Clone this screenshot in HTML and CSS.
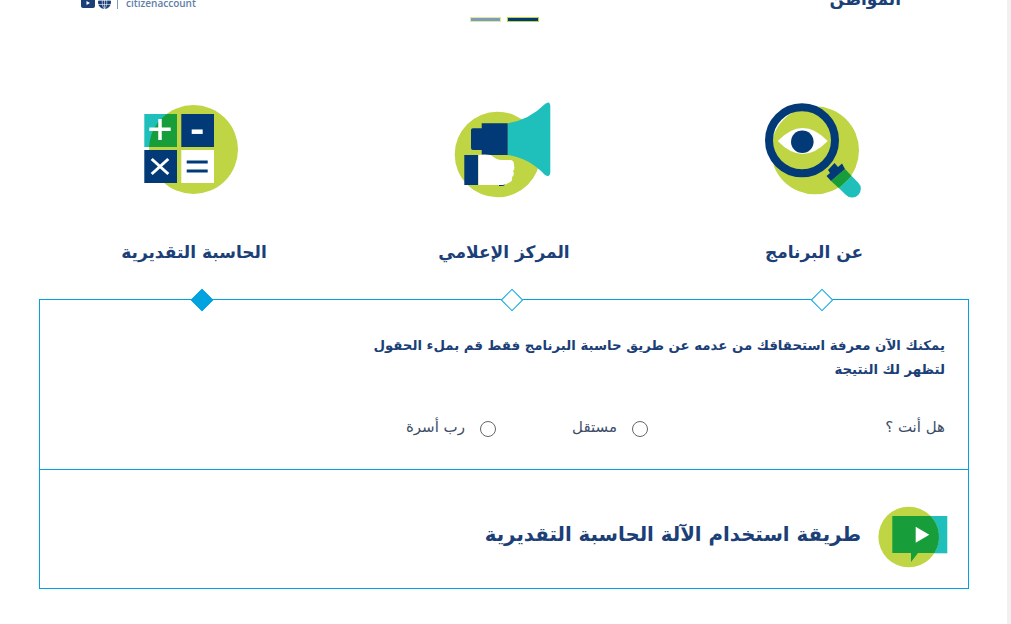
FILE: index.html
```html
<!DOCTYPE html>
<html lang="ar" dir="rtl">
<head>
<meta charset="utf-8">
<title>حساب المواطن</title>
<link rel="stylesheet" href="styles.css">
</head>
<body>
<div class="page">
  <main class="content">
    <header class="top">
      <div class="top-title">المواطن</div>
      <div class="social" dir="ltr">
        <svg class="social-icon" width="14" height="10" viewBox="0 0 14 10"><rect width="14" height="10" rx="2" fill="#1c3f78"/><path d="M5.500 3v4l3.500-2z" fill="#fff"/></svg>
        <svg class="social-icon" width="13" height="13" viewBox="0 0 13 13"><circle cx="6.500" cy="6.500" r="6.500" fill="#1c3f78"/><path d="M0 4.500h13M0 8.500h13M6.500 0v13M6.500 0c-3 3-3 10 0 13M6.500 0c3 3 3 10 0 13" stroke="#fff" stroke-width=".6" fill="none"/></svg>
        <span class="social-sep"></span>
        <span class="social-name">citizenaccount</span>
      </div>
    </header>
    <div class="pager" dir="ltr">
      <span class="pager-bar pager-bar-muted"></span>
      <span class="pager-bar pager-bar-active"></span>
    </div>

    <nav class="tabs">
      <div class="tab">
        <svg class="tab-icon" width="100" height="100" viewBox="0 0 100 100">
          <circle cx="51" cy="50.300" r="44" fill="#bfd544"/>
          <path d="M75 88.300L87.700 76L94.300 82.700A8.500 8.500 0 0 1 82 95Z" fill="#1fbfbb"/>
          <path d="M67 81L81 69L87.700 76L75 88.300Z" fill="#179e3a"/>
          <path d="M64 70L70.500 63L74 67L78 63.500L81 69L67 81L62.500 76L66 73Z" fill="#023a78"/>
          <circle cx="38" cy="40.300" r="33" fill="none" stroke="#023a78" stroke-width="8"/>
          <path d="M13.700 41Q38.700 15 63.700 41Q38.700 67 13.700 41Z" fill="#fff"/>
          <circle cx="38.300" cy="41.700" r="11.300" fill="#023a78"/>
        </svg>
        <h2 class="tab-title">عن البرنامج</h2>
      </div>
      <div class="tab">
        <svg class="tab-icon" width="100" height="100" viewBox="0 0 100 100">
          <circle cx="43.500" cy="54.500" r="42.800" fill="#bfd544"/>
          <path d="M53.700 23.300Q75 20 91 4Q96 0 96.300 6V72Q96 78 91 75Q75 58 53.700 55Z" fill="#1fbfbb"/>
          <path d="M27.700 23.300H53.700V55H27.700V50H19Q17 50 17 48V30Q17 28.300 19 28.300H27.700Z" fill="#023a78"/>
          <path d="M10.300 55H24.300V85H10.300Z" fill="#023a78"/>
          <path d="M45 82h6q1 4-3 4h-3z" fill="#023a78"/>
          <path d="M24.300 55Q30 54 37 55Q42 60 48 60H56Q60 60 60 65Q61 70 59 71Q61 75 58 77Q59 82 54 83Q52 85 46 85H24.300Z" fill="#fff"/>
        </svg>
        <h2 class="tab-title">المركز الإعلامي</h2>
      </div>
      <div class="tab">
        <svg class="tab-icon" width="100" height="100" viewBox="0 0 100 100">
          <circle cx="49.500" cy="49.500" r="44.500" fill="#bfd544"/>
          <rect x="0.300" y="14" width="32.700" height="33" fill="#1fbfbb"/>
          <path d="M22.700 14H33V47H5.100A44.500 44.500 0 0 1 22.700 14Z" fill="#179e3a"/>
          <rect x="37.300" y="14" width="32.700" height="33" fill="#023a78"/>
          <rect x="0.300" y="50" width="32.700" height="33" fill="#023a78"/>
          <rect x="37.300" y="50" width="32.700" height="33" fill="#fff"/>
          <path d="M16 19V40M5.300 29.300H26.700" stroke="#fff" stroke-width="3.500" fill="none"/>
          <path d="M47.700 31.700H58.700" stroke="#fff" stroke-width="4.500" fill="none"/>
          <path d="M7.700 59L24.300 74M24.300 59L7.700 74" stroke="#fff" stroke-width="3" fill="none"/>
          <path d="M42.700 62H63.700M42.700 71H63.700" stroke="#023a78" stroke-width="3" fill="none"/>
        </svg>
        <h2 class="tab-title">الحاسبة التقديرية</h2>
      </div>
    </nav>

    <section class="panel">
      <span class="marker marker-one"></span>
      <span class="marker marker-two"></span>
      <span class="marker marker-three"></span>
      <div class="panel-body">
        <p class="intro">يمكنك الآن معرفة استحقاقك من عدمه عن طريق حاسبة البرنامج فقط قم بملء الحقول لتظهر لك النتيجة</p>
        <div class="question">
          <span class="q-label">هل أنت ؟</span>
          <label class="option option-first"><input type="radio" name="kind" class="radio"><span>مستقل</span></label>
          <label class="option"><input type="radio" name="kind" class="radio"><span>رب أسرة</span></label>
        </div>
      </div>
      <div class="howto">
        <svg class="howto-icon" width="70" height="62" viewBox="0 0 70 62">
          <rect x="30" y="10" width="39.300" height="37.300" fill="#1fbfbb"/>
          <circle cx="30.700" cy="31" r="30.300" fill="#bfd544"/>
          <path d="M14.300 10H52.500A30.300 30.300 0 0 1 56.400 47H40L33 56V47H14.300Z" fill="#179e3a"/>
          <path d="M37.700 20.700L51.300 28.700L37.700 36.700Z" fill="#fff"/>
        </svg>
        <h3 class="howto-title">طريقة استخدام الآلة الحاسبة التقديرية</h3>
      </div>
    </section>
  </main>
  <div class="scrollbar"></div>
</div>
</body>
</html>
```
FILE: styles.css
```css
* { box-sizing: border-box; }
html, body { margin: 0; height: 100%; overflow: hidden; background: #fff; }
body { font-family: "DejaVu Sans", "Noto Sans", sans-serif; color: #023a78; }
.page { display: flex; height: 624px; direction: ltr; }
.scrollbar { width: 4px; background: #f1f1f1; flex: none; }
.content { flex: 1; direction: rtl; min-width: 0; }

.top { height: 9px; margin: 0 38px 0 81px; display: flex; justify-content: space-between; align-items: flex-end; overflow: hidden; padding: 0 68px 0 0; }
.top-title { font-size: 17px; line-height: 20px; font-weight: 700; color: #1c3f78; }
.social { display: flex; align-items: center; gap: 3px; height: 13px; }
.social-sep { width: 1px; height: 12px; background: #7f9abb; margin: 0 5px 0 3px; }
.social-name { font-family: "Open Sans", sans-serif; font-size: 10px; font-weight: 600; color: #5f7ea8; }
.pager { display: flex; justify-content: center; gap: 6px; margin: 8px 0 0; padding-left: 2px; height: 5px; }
.pager-bar { width: 31px; height: 5px; display: block; border: 1px solid #bfd544; }
.pager-bar-muted { background: #023a78; opacity: .5; }
.pager-bar-active { width: 32px; background: #023a78; }

.tabs { display: flex; margin: 78px 38px 0 39px; height: 199px; }
.tab { flex: 1; display: flex; flex-direction: column; align-items: center; }
.tab-icon { display: block; }
.tab-title { margin: 37px 0 0; font-size: 17px; line-height: 30px; font-weight: 700; color: #1c3f78; }

.panel { position: relative; margin: 0 38px 0 39px; width: 930px; border: 1px solid #00a2e0; height: 290px; }
.marker { position: absolute; top: -8px; width: 16px; height: 16px; transform: rotate(45deg); background: #fff; border: 1px solid #00a2e0; }
.marker-one { left: 774px; }
.marker-two { left: 464px; }
.marker-three { left: 154px; background: #00a2e0; }

.panel-body { height: 170px; padding: 34px 23px 0 0; border-bottom: 1px solid #00a2e0; }
.intro { margin: 0; width: 600px; font-size: 13.3px; line-height: 24px; font-weight: 700; color: #1c3f78; }
.question { display: flex; align-items: center; margin-top: 35px; font-size: 15px; color: #3d4d68; }
.q-label { width: 297px; }
.option { display: flex; align-items: center; gap: 15px; }
.option-first { width: 152px; }
.radio { appearance: none; margin: 4px 0 0; width: 16px; height: 16px; border: 1px solid #666; border-radius: 50%; background: #fff; }

.howto { display: flex; align-items: center; height: 118px; padding: 12px 20px 0 0; gap: 17px; }
.howto-icon { display: block; margin-top: 4px; }
.howto-title { margin: 0; font-size: 19.75px; line-height: 30px; font-weight: 700; color: #1c3f78; }
```
